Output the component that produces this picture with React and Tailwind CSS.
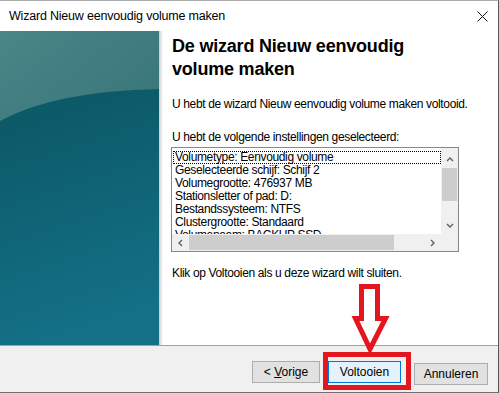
import React from 'react';

const rows = [
  'Volumetype: Eenvoudig volume',
  'Geselecteerde schijf: Schijf 2',
  'Volumegrootte: 476937 MB',
  'Stationsletter of pad: D:',
  'Bestandssysteem: NTFS',
  'Clustergrootte: Standaard',
  'Volumenaam: BACKUP SSD',
];

const SidePanel = () => (
  <svg width="159" height="314" viewBox="0 0 159 314" className="block">
    <defs>
      <linearGradient id="top" x1="0" y1="0" x2="0.4" y2="1">
        <stop offset="0" stopColor="#4a8587" />
        <stop offset="1" stopColor="#2b6a70" />
      </linearGradient>
      <linearGradient id="low" x1="0" y1="0" x2="0.2" y2="1">
        <stop offset="0" stopColor="#0b5663" />
        <stop offset="1" stopColor="#137086" />
      </linearGradient>
    </defs>
    <rect width="159" height="314" fill="url(#top)" />
    <path d="M0 90 Q 55 60 159 58 L159 314 L0 314 Z" fill="url(#low)" />
  </svg>
);

const Chevron = ({ dir }) => {
  const d = {
    up: 'M2 6 L5 3 L8 6',
    down: 'M2 3 L5 6 L8 3',
    left: 'M6 2 L3 5 L6 8',
    right: 'M3 2 L6 5 L3 8',
  }[dir];
  return (
    <svg width="10" height="9" viewBox="0 0 10 9">
      <path d={d} fill="none" stroke="#606060" strokeWidth="1.4" />
    </svg>
  );
};

const Button = ({ children, primary, className = 'w-[73px]' }) => (
  <button
    className={
      primary
        ? `${className} h-[22px] border border-[#0078d7] bg-[#e5f1fb] text-[12px] text-black`
        : `${className} h-[22px] border border-[#adadad] bg-[#e1e1e1] text-[12px] text-black`
    }
  >
    {children}
  </button>
);

export default function App() {
  return (
    <div
      className="relative w-[499px] h-[393px] flex flex-col bg-white border-t border-r border-b border-t-[#aaaaaa] border-r-[#555555] border-b-[#707070] overflow-hidden text-black"
      style={{ fontFamily: '"Liberation Sans", Arial, sans-serif' }}
    >
      {/* title bar */}
      <div className="h-[30px] flex items-center justify-between pl-[9px] pr-[10px]">
        <span className="text-[12.5px] tracking-[-0.2px]">Wizard Nieuw eenvoudig volume maken</span>
        <svg width="11" height="11" viewBox="0 0 11 11">
          <path d="M0.5 0.5 L10.5 10.5 M10.5 0.5 L0.5 10.5" stroke="#111" strokeWidth="1" />
        </svg>
      </div>

      <div className="flex h-[314px]">
        <div className="w-[159px] shrink-0">
          <SidePanel />
        </div>
        <div className="w-[4px] shrink-0 bg-gradient-to-r from-[#c8cdd0] to-white" />

        <div className="flex flex-col pl-[9px] pt-[4px] text-[12px] tracking-[-0.35px]">
          <h1 className="text-[18px] font-bold leading-[23px] tracking-[-0.2px] w-[260px]">
            De wizard Nieuw eenvoudig volume maken
          </h1>
          <p className="mt-[16px] leading-[14px]">U hebt de wizard Nieuw eenvoudig volume maken voltooid.</p>
          <p className="mt-[19px] leading-[14px]">U hebt de volgende instellingen geselecteerd:</p>

          {/* settings list */}
          <div className="mt-[3px] w-[288px] h-[105px] border border-[#828790] grid grid-cols-[1fr_17px] grid-rows-[1fr_17px] -ml-[1px]">
            <div className="overflow-hidden pt-[3px] pl-[1px]">
              {rows.map((r, i) => (
                <div
                  key={r}
                  className={
                    i === 0
                      ? 'h-[13px] leading-[11px] pl-[1px] border border-dotted border-black'
                      : 'h-[13px] leading-[13px] pl-[2px] whitespace-nowrap'
                  }
                >
                  {r}
                </div>
              ))}
            </div>
            <div className="bg-[#f0f0f0] flex flex-col items-center">
              <div className="h-[17px] flex items-center justify-center mt-[3px]">
                <Chevron dir="up" />
              </div>
              <div className="w-[15px] h-[33px] bg-[#cdcdcd]" />
              <div className="flex-1" />
              <div className="h-[17px] flex items-center justify-center">
                <Chevron dir="down" />
              </div>
            </div>
            <div className="bg-[#f0f0f0] flex items-center">
              <div className="w-[17px] flex justify-center">
                <Chevron dir="left" />
              </div>
              <div className="w-[205px] h-[15px] bg-[#cdcdcd]" />
              <div className="flex-1" />
              <div className="w-[17px] flex justify-center">
                <Chevron dir="right" />
              </div>
            </div>
            <div className="bg-[#f0f0f0]" />
          </div>

          <p className="mt-[14px] leading-[14px]">Klik op Voltooien als u deze wizard wilt sluiten.</p>
        </div>
      </div>

      {/* footer */}
      <div className="flex-1 border-t border-[#a0a0a0] bg-[#f0f0f0] flex items-start justify-end pt-[15px] pr-[10px]">
        <div className="flex gap-[8px]">
          <Button className="w-[68px]">
            &lt; <span className="underline">V</span>orige
          </Button>
          <Button primary>Voltooien</Button>
          <div className="ml-[5px]">
            <Button className="w-[74px]">Annuleren</Button>
          </div>
        </div>
      </div>

      {/* red annotation */}
      <svg className="absolute left-0 top-0 pointer-events-none" width="499" height="393">
        <polygon
          points="361.5,285.5 377.5,285.5 377.5,317.5 385.5,317.5 370,348 355.5,317.5 361.5,317.5"
          fill="white"
          stroke="#e3151f"
          strokeWidth="5"
          strokeLinejoin="miter"
        />
      </svg>
      <div className="absolute left-[323px] top-[351px] w-[88px] h-[38px] border-[5px] border-[#e3151f]" />
    </div>
  );
}
